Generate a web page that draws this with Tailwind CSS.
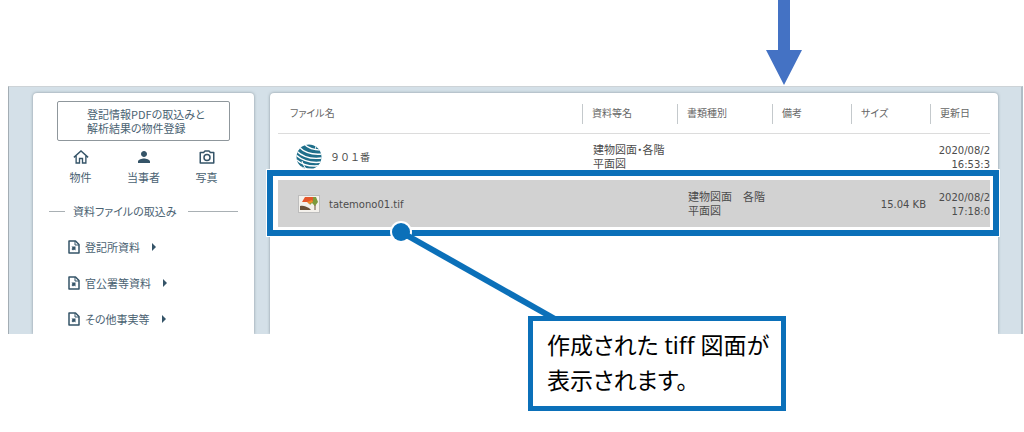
<!DOCTYPE html>
<html lang="ja">
<head>
  <meta charset="UTF-8" />
  <meta name="viewport" content="width=device-width, initial-scale=1.0" />
  <title>資料ファイルの取込み</title>
  <script src="https://cdn.jsdelivr.net/npm/@tailwindcss/browser@4"></script>
</head>
<body class="bg-white font-['DejaVu_Sans','Noto_Sans_CJK_JP',sans-serif] [font-feature-settings:'palt']">

  <div class="relative min-h-screen pt-[86px]">

    <!-- App window -->
    <main class="ml-2 mr-px flex gap-4 overflow-hidden border-t border-l border-t-[#cdd3d7] border-l-[#a3adb4] border-r-2 border-r-[#b0bdc6] bg-[#d4e0e8] pt-[6px] pl-6 pr-[23px]">

      <!-- Sidebar -->
      <aside class="w-[221px] shrink-0 rounded-t-sm bg-white pt-2 pb-2 text-[11px] leading-[14px] text-[#4a6272] shadow-[0_0_3px_rgba(80,95,105,0.6)] font-['Noto_Sans_CJK_JP',sans-serif]">
        <div class="px-6">
          <button type="button" class="w-full rounded-xs border border-[#8f979c] py-[5px] pl-[29px] text-left">登記情報PDFの取込みと<br />解析結果の物件登録</button>
        </div>

        <nav class="mt-[7px] grid grid-cols-3 px-4">
          <button type="button" class="flex flex-col items-center gap-1">
            <svg class="size-[18px]" viewBox="0 0 24 24" fill="none" stroke="#355468" stroke-width="1.800"><path d="M2.500 12.500L12 4l9.500 8.500M5.500 10.500V20H10v-6h4v6h4.500v-9.500" /></svg>
            物件
          </button>
          <button type="button" class="flex flex-col items-center gap-1">
            <svg class="size-[18px]" viewBox="0 0 24 24" fill="#355468"><path d="M12 12c2.210 0 4-1.790 4-4s-1.790-4-4-4-4 1.790-4 4 1.790 4 4 4zm0 2c-2.670 0-8 1.340-8 4v2h16v-2c0-2.660-5.330-4-8-4z" /></svg>
            当事者
          </button>
          <button type="button" class="flex flex-col items-center gap-1">
            <svg class="size-[18px]" viewBox="0 0 24 24" fill="none" stroke="#355468" stroke-width="2"><path d="M3 6h4.500l1.800-2h5.400l1.800 2H21v14H3z" stroke-linejoin="round" /><circle cx="12" cy="12.500" r="4" /></svg>
            写真
          </button>
        </nav>

        <div class="mt-5 flex items-center px-4">
          <span class="h-px w-4 bg-[#a9b0b4]"></span>
          <h2 class="ml-2 mr-3">資料ファイルの取込み</h2>
          <span class="h-px flex-1 bg-[#a9b0b4]"></span>
        </div>

        <ul class="mt-[22px] flex flex-col gap-[22px] pl-[34px]">
          <li>
            <button type="button" class="flex items-center gap-1">
              <svg class="size-[14px]" viewBox="0 0 14 14" fill="none" stroke="#355468" stroke-width="1.500"><path d="M2 1h6.500L12 4.500V13H2z" stroke-linejoin="round" /><path d="M8 1v4h4" stroke-width="1" /><path d="M4.500 6.500h4v4L7 9.500l-1 1-1.500-1.500 1-1z" fill="#355468" stroke="none" /></svg>
              <span>登記所資料</span>
              <svg class="ml-1 h-2 w-3" viewBox="0 0 12 8" fill="#355468"><path d="M4 0l4 4-4 4z" /></svg>
            </button>
          </li>
          <li>
            <button type="button" class="flex items-center gap-1">
              <svg class="size-[14px]" viewBox="0 0 14 14" fill="none" stroke="#355468" stroke-width="1.500"><path d="M2 1h6.500L12 4.500V13H2z" stroke-linejoin="round" /><path d="M8 1v4h4" stroke-width="1" /><path d="M4.500 6.500h4v4L7 9.500l-1 1-1.500-1.500 1-1z" fill="#355468" stroke="none" /></svg>
              <span>官公署等資料</span>
              <svg class="ml-1 h-2 w-3" viewBox="0 0 12 8" fill="#355468"><path d="M4 0l4 4-4 4z" /></svg>
            </button>
          </li>
          <li>
            <button type="button" class="flex items-center gap-1">
              <svg class="size-[14px]" viewBox="0 0 14 14" fill="none" stroke="#355468" stroke-width="1.500"><path d="M2 1h6.500L12 4.500V13H2z" stroke-linejoin="round" /><path d="M8 1v4h4" stroke-width="1" /><path d="M4.500 6.500h4v4L7 9.500l-1 1-1.500-1.500 1-1z" fill="#355468" stroke="none" /></svg>
              <span>その他事実等</span>
              <svg class="ml-1 h-2 w-3" viewBox="0 0 12 8" fill="#355468"><path d="M4 0l4 4-4 4z" /></svg>
            </button>
          </li>
        </ul>
      </aside>

      <!-- File list -->
      <section class="relative min-w-0 flex-1 rounded-t-sm bg-white px-2 shadow-[0_0_3px_rgba(80,95,105,0.6)]">
        <table class="w-full table-fixed text-[10px] leading-[14px] text-[#4c4c4c]">
          <colgroup>
            <col />
            <col class="w-[95px]" />
            <col class="w-[95px]" />
            <col class="w-[79px]" />
            <col class="w-[79px]" />
            <col class="w-[60px]" />
          </colgroup>
          <thead class="text-[#666]">
            <tr class="h-10 border-b border-[#dcdcdc] text-left">
              <th class="pt-[2px] pl-3 font-normal">ファイル名</th>
              <th class="pt-[2px] font-normal"><div class="border-l border-[#c4c9cc] py-[3px] pl-[9px]">資料等名</div></th>
              <th class="pt-[2px] font-normal"><div class="border-l border-[#c4c9cc] py-[3px] pl-[9px]">書類種別</div></th>
              <th class="pt-[2px] font-normal"><div class="border-l border-[#c4c9cc] py-[3px] pl-[9px]">備考</div></th>
              <th class="pt-[2px] font-normal"><div class="border-l border-[#c4c9cc] py-[3px] pl-[9px]">サイズ</div></th>
              <th class="pt-[2px] font-normal"><div class="border-l border-[#c4c9cc] py-[3px] pl-[9px]">更新日</div></th>
            </tr>
          </thead>
          <tbody>
            <tr class="h-[47px]">
              <td class="pl-[18px]">
                <div class="flex items-center gap-2">
                  <svg class="size-[26px]" viewBox="0 0 26 26">
                    <clipPath id="globe"><circle cx="13" cy="13" r="12.500" /></clipPath>
                    <g clip-path="url(#globe)">
                      <circle cx="13" cy="13" r="13" fill="#1f6f8b" />
                      <g fill="none" stroke="#fff" stroke-width="1.400">
                        <path d="M8 0c4 4 10 6 17 6" />
                        <path d="M3 3c5 5 13 8 23 7" />
                        <path d="M0 6.500c6 6 15 9 26 7.500" />
                        <path d="M0 11c7 6 16 8.500 26 7" />
                        <path d="M0 15.500c7 6 15 7.500 25 6" />
                        <path d="M0 20c6 5 12 6 20 5" />
                        <path d="M19 0c1 2 1 4 0 6M6 17c1 3 2 5 4 8" stroke-width="1" />
                      </g>
                    </g>
                  </svg>
                  <span class="font-['Noto_Sans_CJK_JP',sans-serif] [font-feature-settings:normal]">９０１番</span>
                </div>
              </td>
              <td class="pt-[3px] pl-[11px] text-[11px]">建物図面・各階<br />平面図</td>
              <td></td>
              <td></td>
              <td></td>
              <td class="pt-[3px] text-right">2020/08/2 16:53:3</td>
            </tr>
            <tr class="h-[47px] bg-[#d2d2d2]">
              <td class="pl-5">
                <div class="flex items-center gap-[9px]">
                  <svg class="h-[18px] w-[22px]" viewBox="0 0 22 18">
                    <rect x=".5" y=".5" width="21" height="17" fill="#f4f1ec" stroke="#bdbdbd" />
                    <path d="M4 7l3-5h9l1 3-4 3-3-1z" fill="#e5562a" />
                    <path d="M15 2h3l2 5-3 4-3-3-2 2-1-2 4-2z" fill="#7d9a3c" />
                    <path d="M9 7l5-2 1 2-4 2z" fill="#f08a2c" />
                    <path d="M2 11c4-1 6 1 9 2l2 2H2z" fill="#6b5138" />
                    <path d="M17 10v5" fill="none" stroke="#6b5138" />
                  </svg>
                  <span class="pt-[3px]">tatemono01.tif</span>
                </div>
              </td>
              <td></td>
              <td class="pt-[3px] pl-[11px] text-[11px]">建物図面　各階<br />平面図</td>
              <td></td>
              <td class="pt-[3px] pr-1 text-right">15.04 KB</td>
              <td class="pt-[3px] text-right">2020/08/2 17:18:0</td>
            </tr>
          </tbody>
        </table>

        <!-- Frame round the selected row -->
        <div class="absolute -left-[3px] -right-px top-[77px] h-[66px] border-6 border-[#0b70b9] shadow-[0_0_0_1px_#fff,inset_0_0_0_2px_#fff]"></div>
      </section>
    </main>

    <!-- Arrow from the previous step -->
    <svg class="absolute top-0 left-[766px] h-[86px] w-9" viewBox="0 0 36 86" fill="#4472c4"><path d="M12 0h12v50h12L18 85 0 50h12z" /></svg>

    <!-- Callout -->
    <svg class="absolute top-[220px] left-[388px] h-[104px] w-[180px]" viewBox="0 0 180 104">
      <circle cx="13" cy="12" r="11" fill="#fff" />
      <path d="M13 12L167 99" stroke="#0b70b9" stroke-width="6" />
      <circle cx="13" cy="12" r="9" fill="#0b70b9" />
    </svg>
    <p class="absolute top-[316px] left-[528px] w-[258px] border-5 border-[#0b70b9] bg-white px-[14px] pt-[7px] pb-2 text-[23px] leading-[35px] whitespace-nowrap text-black font-['Noto_Sans','Noto_Sans_CJK_JP',sans-serif]">作成された tiff 図面が<br />表示されます。</p>
  </div>

</body>
</html>
